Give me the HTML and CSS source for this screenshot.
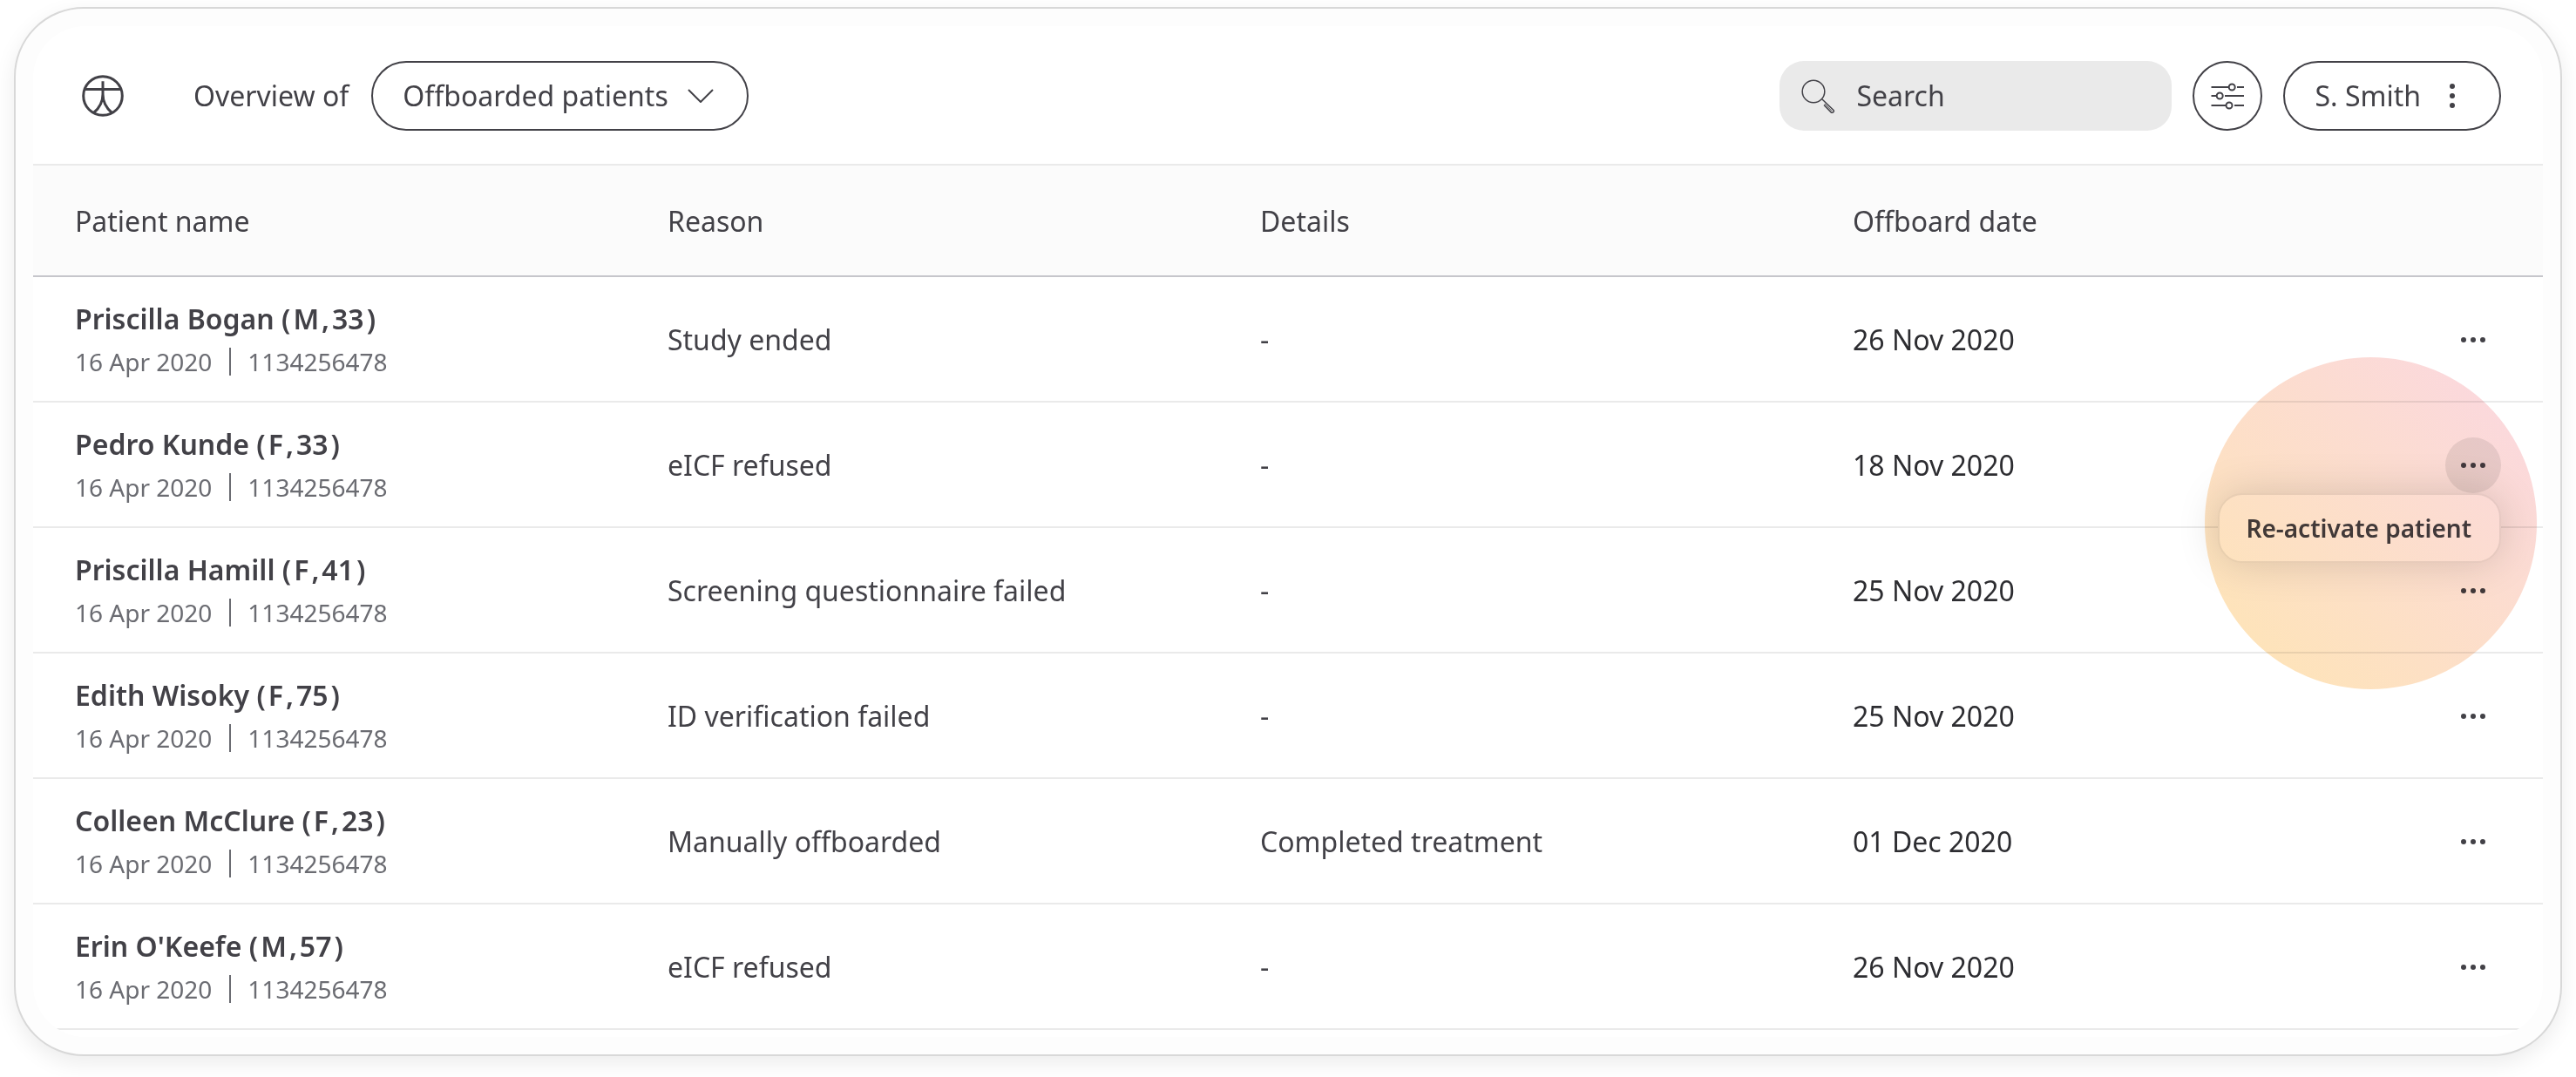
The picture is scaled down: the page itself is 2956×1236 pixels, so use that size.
FILE: index.html
```html
<!DOCTYPE html>
<html lang="en">
<head>
<meta charset="utf-8">
<meta name="viewport" content="width=device-width, initial-scale=1">
<title>Offboarded patients</title>
<link rel="stylesheet" href="styles.css">
</head>
<body>
<svg class="sprite" aria-hidden="true">
  <symbol id="more" viewBox="0 0 32 8"><circle cx="5" cy="4" r="3"/><circle cx="16" cy="4" r="3"/><circle cx="27" cy="4" r="3"/></symbol>
</svg>
<main class="frame">
  <div class="panel">
    <header class="toolbar">
      <svg class="logo" viewBox="0 0 48 48" role="img" aria-label="Home"><circle cx="24" cy="24" r="22.3"/><path d="M3 16.4H45M24 7.3V25M24 22C24 31 20 38 13.500 43.500M24 22C24 31 28 38 34.500 43.500"/></svg>
      <label class="view-label" for="view">Overview of</label>
      <div class="view">
        <select id="view" class="view-select"><option>Offboarded patients</option></select>
        <svg class="chevron" viewBox="0 0 30 16" aria-hidden="true"><path d="M1 1L15 15L29 1"/></svg>
      </div>
      <div class="tools">
        <label class="search">
          <svg class="icon" viewBox="0 0 40 40" aria-hidden="true"><circle cx="15" cy="15" r="12.8"/><path d="M24.500 23.500L37.800 36.200Q39 37.500 37.600 38.800Q36.200 40 35 38.700L27 30.500"/><path class="grip" d="M27.800 29L36 37.400"/></svg>
          <input class="search-input" type="search" placeholder="Search" aria-label="Search">
        </label>
        <button class="round" type="button" aria-label="Filters">
          <svg class="icon" viewBox="0 0 40 40" aria-hidden="true"><path d="M1.500 10H21M31 10H39M1.500 20H7.500M17 20H39M1.500 31H18.500M28 31H39"/><circle cx="25.200" cy="10" r="3.500"/><circle cx="11.200" cy="20" r="3.500"/><circle cx="22" cy="31" r="3.500"/></svg>
        </button>
        <button class="user" type="button">S. Smith
          <svg class="kebab" viewBox="0 0 8 32" aria-hidden="true"><circle cx="4" cy="5" r="3"/><circle cx="4" cy="16" r="3"/><circle cx="4" cy="27" r="3"/></svg>
        </button>
      </div>
    </header>
    <table class="patients">
      <thead>
        <tr><th>Patient name</th><th>Reason</th><th>Details</th><th>Offboard date</th><th class="actions-col" aria-label="Actions"></th></tr>
      </thead>
      <tbody>
        <tr>
          <td><div class="name">Priscilla Bogan <span class="bio"><span>(</span><span>M</span><span>,</span><span>33</span><span>)</span></span></div><div class="meta"><span>16 Apr 2020</span><span class="id">1134256478</span></div></td>
          <td>Study ended</td><td>-</td><td class="date">26 Nov 2020</td>
          <td><button class="more" type="button" aria-label="More"><svg class="dots"><use href="#more"/></svg></button></td>
        </tr>
        <tr>
          <td><div class="name">Pedro Kunde <span class="bio"><span>(</span><span>F</span><span>,</span><span>33</span><span>)</span></span></div><div class="meta"><span>16 Apr 2020</span><span class="id">1134256478</span></div></td>
          <td>eICF refused</td><td>-</td><td class="date">18 Nov 2020</td>
          <td><div class="menu-anchor"><button class="more more-open" type="button" aria-label="More" aria-expanded="true"><svg class="dots"><use href="#more"/></svg></button><button class="menu" type="button">Re-activate patient</button><div class="spotlight"></div></div></td>
        </tr>
        <tr>
          <td><div class="name">Priscilla Hamill <span class="bio"><span>(</span><span>F</span><span>,</span><span>41</span><span>)</span></span></div><div class="meta"><span>16 Apr 2020</span><span class="id">1134256478</span></div></td>
          <td>Screening questionnaire failed</td><td>-</td><td class="date">25 Nov 2020</td>
          <td><button class="more" type="button" aria-label="More"><svg class="dots"><use href="#more"/></svg></button></td>
        </tr>
        <tr>
          <td><div class="name">Edith Wisoky <span class="bio"><span>(</span><span>F</span><span>,</span><span>75</span><span>)</span></span></div><div class="meta"><span>16 Apr 2020</span><span class="id">1134256478</span></div></td>
          <td>ID verification failed</td><td>-</td><td class="date">25 Nov 2020</td>
          <td><button class="more" type="button" aria-label="More"><svg class="dots"><use href="#more"/></svg></button></td>
        </tr>
        <tr>
          <td><div class="name">Colleen McClure <span class="bio"><span>(</span><span>F</span><span>,</span><span>23</span><span>)</span></span></div><div class="meta"><span>16 Apr 2020</span><span class="id">1134256478</span></div></td>
          <td>Manually offboarded</td><td>Completed treatment</td><td class="date">01 Dec 2020</td>
          <td><button class="more" type="button" aria-label="More"><svg class="dots"><use href="#more"/></svg></button></td>
        </tr>
        <tr>
          <td><div class="name">Erin O'Keefe <span class="bio"><span>(</span><span>M</span><span>,</span><span>57</span><span>)</span></span></div><div class="meta"><span>16 Apr 2020</span><span class="id">1134256478</span></div></td>
          <td>eICF refused</td><td>-</td><td class="date">26 Nov 2020</td>
          <td><button class="more" type="button" aria-label="More"><svg class="dots"><use href="#more"/></svg></button></td>
        </tr>
      </tbody>
    </table>
  </div>
</main>
</body>
</html>
```
FILE: styles.css
```css
:root {
  --ink: #424147;
  --line: #eaeaea;
}

* { box-sizing: border-box; }

body {
  margin: 0;
  padding: 8px 16px 24px;
  background: #fff;
  color: var(--ink);
  font: 32px/48px "Noto Sans", sans-serif;
}

button, input, select { font: inherit; color: inherit; margin: 0; }
button, select { cursor: pointer; }

.sprite { position: absolute; width: 0; height: 0; }

.frame {
  padding: 20px;
  border: 2px solid #d8d8d8;
  border-radius: 80px;
  background: #fdfdfd;
  box-shadow: 0 8px 24px rgba(0, 0, 0, 0.08);
}

.panel {
  overflow: hidden;
  padding-bottom: 8px;
  border-radius: 60px;
  background: #fff;
}

.toolbar {
  display: flex;
  align-items: center;
  padding: 40px 48px 38px;
  border-bottom: 2px solid var(--line);
}

.logo {
  width: 48px;
  height: 48px;
  margin: 0 80px 0 8px;
  fill: none;
  stroke: var(--ink);
  stroke-width: 3;
}

.view-label { margin-right: 26px; }

.view { position: relative; }

.view-select {
  display: block;
  height: 80px;
  padding: 0 90px 0 34px;
  border: 2px solid var(--ink);
  border-radius: 40px;
  background: transparent;
  appearance: none;
}

.chevron {
  position: absolute;
  top: 32px;
  right: 40px;
  width: 30px;
  height: 16px;
  fill: none;
  stroke: var(--ink);
  stroke-width: 2;
  pointer-events: none;
}

.tools { display: flex; gap: 24px; margin-left: auto; }

.search {
  display: flex;
  align-items: center;
  gap: 24px;
  width: 450px;
  height: 80px;
  padding: 0 24px;
  border-radius: 28px;
  background: #eaeaea;
}

.icon {
  flex: none;
  width: 40px;
  height: 40px;
  fill: none;
  stroke: var(--ink);
  stroke-width: 2;
}

.search .icon { stroke-width: 1.5; }
.search .grip { stroke-width: 1; }

.search-input {
  flex: 1;
  min-width: 0;
  padding: 0;
  border: 0;
  outline: 0;
  background: none;
  appearance: none;
}

.search-input::placeholder { color: var(--ink); opacity: 1; }

.round, .user {
  display: flex;
  align-items: center;
  justify-content: center;
  height: 80px;
  border: 2px solid var(--ink);
  border-radius: 40px;
  background: transparent;
}

.round { width: 80px; padding: 0; }

.user { gap: 32px; padding: 0 50px 0 34px; }

.kebab { width: 8px; height: 32px; fill: var(--ink); }

.patients {
  width: 100%;
  border-collapse: separate;
  border-spacing: 0;
  table-layout: fixed;
}

.patients th {
  height: 128px;
  padding: 0 0 0 48px;
  background: #fbfbfb;
  box-shadow: inset 0 -2px #c6c6cb;
  font-weight: 400;
  text-align: left;
}

.patients .actions-col { width: 160px; }

.patients td {
  height: 144px;
  padding: 0 0 0 48px;
  box-shadow: inset 0 -2px var(--line);
}

.patients .date { color: #2d2d31; }

.name { font-weight: 600; }

.bio { display: inline-flex; gap: 3px; }

.meta {
  display: flex;
  align-items: center;
  gap: 20px;
  margin: 4px 0 2px;
  color: #6b6c72;
  font-size: 28px;
  line-height: 42px;
}

.id { display: flex; align-items: center; gap: 19px; }

.id::before {
  content: "";
  width: 2px;
  height: 32px;
  background: #6b6c72;
}

.menu-anchor { position: relative; width: 64px; }

.more {
  display: flex;
  align-items: center;
  justify-content: center;
  width: 64px;
  height: 64px;
  padding: 0;
  border: 0;
  border-radius: 50%;
  background: transparent;
}

.more-open { background: #eaeaea; }

.dots { width: 32px; height: 8px; fill: var(--ink); }

.menu {
  position: absolute;
  top: 64px;
  right: 0;
  z-index: 1;
  height: 80px;
  padding: 0 32px 0 30px;
  border: 2px solid #eaeaea;
  border-radius: 28px;
  background: #fff;
  box-shadow: 0 0 48px rgba(0, 0, 0, 0.15);
  font-size: 28px;
  font-weight: 600;
  white-space: nowrap;
}

/* Tinted disc that draws attention to the open menu */
.spotlight {
  position: absolute;
  top: -92px;
  right: -41px;
  z-index: 2;
  width: 381px;
  height: 381px;
  border-radius: 50%;
  background: linear-gradient(45deg, #fee4b8 10%, #fbd8de 90%);
  mix-blend-mode: multiply;
  pointer-events: none;
}
```
